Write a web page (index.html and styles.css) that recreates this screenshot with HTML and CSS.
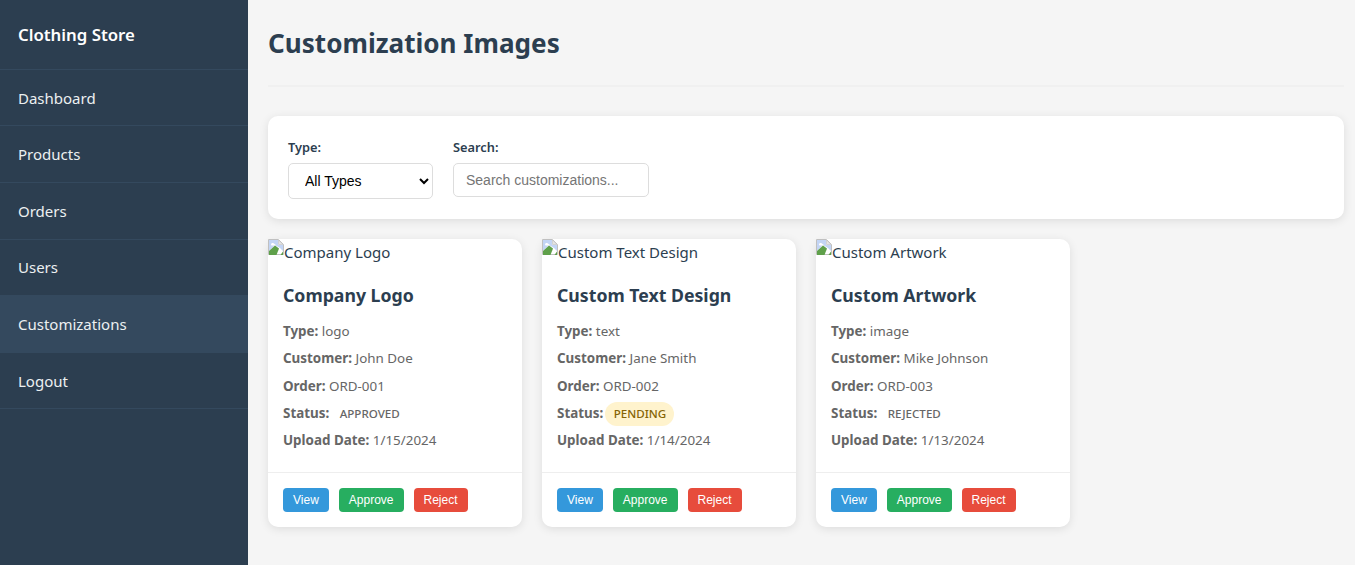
FILE: index.html
```html
<!DOCTYPE html>
<html lang="en">
<head>
  <meta charset="UTF-8"/>
  <title>Customization Images - Clothing Store</title>
  <link rel="stylesheet" href="styles.css">
</head>
<body>
  <!-- SIDEBAR -->
  <div class="sidebar">
    <div class="brand">Clothing Store</div>
    <a class="nav-link" href="#">Dashboard</a>
    <a class="nav-link" href="#">Products</a>
    <a class="nav-link" href="#">Orders</a>
    <a class="nav-link" href="#">Users</a>
    <a class="nav-link active" href="#">Customizations</a>
    <a class="nav-link" href="#">Logout</a>
  </div>

  <!-- MAIN -->
  <div class="main">
    <div class="page-header">
      <h1>Customization Images</h1>
    </div>

    <div class="filters">
      <div class="filter-group">
        <label for="type">Type:</label>
        <select id="type"><option>All Types</option></select>
      </div>
      <div class="filter-group">
        <label for="search">Search:</label>
        <input id="search" type="text" placeholder="Search customizations...">
      </div>
    </div>

    <div class="card-grid">
      <div class="card">
        <div class="card-image">
          <svg class="broken" viewBox="0 0 16 16" width="16" height="16"><path d="M.5.5H10.5L15.5 5.5V15.5H.5Z" fill="#fff" stroke="#c0c0c0"/><path d="M1 1H10V6H15V12L12 9L7 6L1 12Z" fill="#c3d5f5"/><path d="M3 5.5C3 4 5.5 3.5 6.5 5C7.5 5 8 6 7 6.5H3.5Z" fill="#fff"/><path d="M10.5 1V5.5H15Z" fill="#e4e4e4" stroke="#c0c0c0" stroke-width=".6"/><path d="M1 16V12L7 6.5L11 9.5L8.5 16Z" fill="#5fa04a"/><path d="M12.5 16L15 12.5V16Z" fill="#5fa04a"/></svg><span>Company Logo</span>
        </div>
        <div class="card-body">
          <h3>Company Logo</h3>
          <p><strong>Type:</strong> logo</p>
          <p><strong>Customer:</strong> John Doe</p>
          <p><strong>Order:</strong> ORD-001</p>
          <p><strong>Status:</strong> <span class="status">APPROVED</span></p>
          <p><strong>Upload Date:</strong> 1/15/2024</p>
        </div>
        <div class="card-actions">
          <button class="btn btn-view">View</button>
          <button class="btn btn-approve">Approve</button>
          <button class="btn btn-reject">Reject</button>
        </div>
      </div>

      <div class="card">
        <div class="card-image">
          <svg class="broken" viewBox="0 0 16 16" width="16" height="16"><path d="M.5.5H10.5L15.5 5.5V15.5H.5Z" fill="#fff" stroke="#c0c0c0"/><path d="M1 1H10V6H15V12L12 9L7 6L1 12Z" fill="#c3d5f5"/><path d="M3 5.5C3 4 5.5 3.5 6.5 5C7.5 5 8 6 7 6.5H3.5Z" fill="#fff"/><path d="M10.5 1V5.5H15Z" fill="#e4e4e4" stroke="#c0c0c0" stroke-width=".6"/><path d="M1 16V12L7 6.5L11 9.5L8.5 16Z" fill="#5fa04a"/><path d="M12.5 16L15 12.5V16Z" fill="#5fa04a"/></svg><span>Custom Text Design</span>
        </div>
        <div class="card-body">
          <h3>Custom Text Design</h3>
          <p><strong>Type:</strong> text</p>
          <p><strong>Customer:</strong> Jane Smith</p>
          <p><strong>Order:</strong> ORD-002</p>
          <p><strong>Status:</strong> <span class="status pending">PENDING</span></p>
          <p><strong>Upload Date:</strong> 1/14/2024</p>
        </div>
        <div class="card-actions">
          <button class="btn btn-view">View</button>
          <button class="btn btn-approve">Approve</button>
          <button class="btn btn-reject">Reject</button>
        </div>
      </div>

      <div class="card">
        <div class="card-image">
          <svg class="broken" viewBox="0 0 16 16" width="16" height="16"><path d="M.5.5H10.5L15.5 5.5V15.5H.5Z" fill="#fff" stroke="#c0c0c0"/><path d="M1 1H10V6H15V12L12 9L7 6L1 12Z" fill="#c3d5f5"/><path d="M3 5.5C3 4 5.5 3.5 6.5 5C7.5 5 8 6 7 6.5H3.5Z" fill="#fff"/><path d="M10.5 1V5.5H15Z" fill="#e4e4e4" stroke="#c0c0c0" stroke-width=".6"/><path d="M1 16V12L7 6.5L11 9.5L8.5 16Z" fill="#5fa04a"/><path d="M12.5 16L15 12.5V16Z" fill="#5fa04a"/></svg><span>Custom Artwork</span>
        </div>
        <div class="card-body">
          <h3>Custom Artwork</h3>
          <p><strong>Type:</strong> image</p>
          <p><strong>Customer:</strong> Mike Johnson</p>
          <p><strong>Order:</strong> ORD-003</p>
          <p><strong>Status:</strong> <span class="status">REJECTED</span></p>
          <p><strong>Upload Date:</strong> 1/13/2024</p>
        </div>
        <div class="card-actions">
          <button class="btn btn-view">View</button>
          <button class="btn btn-approve">Approve</button>
          <button class="btn btn-reject">Reject</button>
        </div>
      </div>
    </div>
  </div>
</body>
</html>
```

FILE: styles.css
```css
/* GLOBAL */
* {
  margin: 0;
  padding: 0;
  box-sizing: border-box;
}
body {
  font-family: "Noto Sans", "Open Sans", sans-serif;
  background: #f5f5f5;
  color: #333;
  display: flex;
  height: 565px;
  overflow: hidden;
}

/* SIDEBAR */
.sidebar {
  width: 248px;
  flex-shrink: 0;
  background: #2c3e50;
  color: #fff;
}
.brand {
  height: 69.8px;
  padding: 0 18px;
  display: flex;
  align-items: center;
  font-size: 16.8px;
  font-weight: 600;
  border-bottom: 1px solid #34495e;
}
.nav-link {
  display: flex;
  align-items: center;
  height: 56.6px;
  padding: 0 18px;
  color: #ecf0f1;
  font-size: 15px;
  text-decoration: none;
  border-bottom: 1px solid #34495e;
}
.nav-link.active {
  background: #34495e;
}

/* MAIN */
.main {
  flex: 1;
  padding: 20px 11px 20px 20px;
}
.page-header {
  height: 67px;
  border-bottom: 2px solid #f0f0f0;
  margin-bottom: 29px;
}
.page-header h1 {
  font-size: 26.1px;
  font-weight: 700;
  color: #2c3e50;
  line-height: 46px;
}

/* FILTERS */
.filters {
  display: flex;
  gap: 20px;
  height: 103px;
  padding: 20px;
  background: #fff;
  border-radius: 10px;
  box-shadow: 0 2px 10px rgba(0,0,0,0.1);
  margin-bottom: 20px;
}
.filter-group label {
  display: block;
  height: 27px;
  font-size: 12.8px;
  font-weight: 600;
  line-height: 22px;
  color: #2c3e50;
}
.filter-group select {
  display: block;
  width: 145px;
  height: 36px;
  padding: 0 12px;
  font-family: "Liberation Sans", Arial, sans-serif;
  font-size: 14px;
  color: #000;
  background: #fff;
  border: 1px solid #ddd;
  border-radius: 5px;
}
.filter-group input {
  display: block;
  width: 196px;
  height: 34px;
  padding: 0 12px;
  font-family: "Liberation Sans", Arial, sans-serif;
  font-size: 14px;
  border: 1px solid #ddd;
  border-radius: 5px;
}

/* CARDS */
.card-grid {
  display: flex;
  gap: 20px;
}
.card {
  width: 254px;
  height: 288px;
  background: #fff;
  border-radius: 10px;
  box-shadow: 0 2px 10px rgba(0,0,0,0.1);
}
.card-image {
  display: flex;
  height: 28px;
  font-size: 15px;
  line-height: 27px;
  color: #2c3e50;
}
.broken {
  flex-shrink: 0;
}
.card-body {
  padding: 15px;
  height: 206px;
  border-bottom: 1px solid #eee;
}
.card-body h3 {
  font-size: 17.7px;
  font-weight: 700;
  color: #2c3e50;
  line-height: 27px;
  margin-bottom: 9px;
}
.card-body p {
  font-size: 13.4px;
  line-height: 27.3px;
  color: #666;
}
.status {
  display: inline-block;
  margin-left: -2px;
  padding: 0 8px 0 9px;
  font-size: 11.6px;
  font-weight: 500;
  line-height: 24px;
  border-radius: 12px;
  vertical-align: middle;
}
.status.pending {
  background: #fff3cd;
  color: #856404;
}

/* BUTTONS */
.card-actions {
  display: flex;
  gap: 10px;
  padding: 15px;
}
.btn {
  height: 24px;
  padding: 0 10px;
  font-family: "Liberation Sans", Arial, sans-serif;
  font-size: 12px;
  color: #fff;
  border: none;
  border-radius: 4px;
}
.btn-view {
  background: #3498db;
}
.btn-approve {
  background: #27ae60;
}
.btn-reject {
  background: #e74c3c;
}
```
